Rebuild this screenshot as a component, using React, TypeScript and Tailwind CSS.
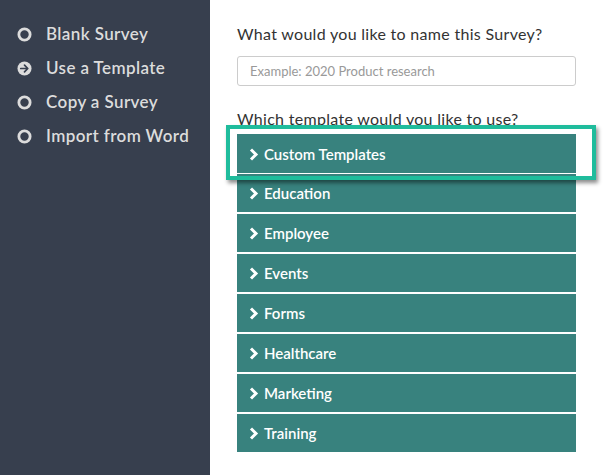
import { FC } from "react";

const sideItems = [
  { label: "Blank Survey", active: false },
  { label: "Use a Template", active: true },
  { label: "Copy a Survey", active: false },
  { label: "Import from Word", active: false },
];

const templates = [
  "Custom Templates",
  "Education",
  "Employee",
  "Events",
  "Forms",
  "Healthcare",
  "Marketing",
  "Training",
];

const RingIcon: FC = () => (
  <svg width="15" height="15" viewBox="0 0 16 16">
    <circle cx="8" cy="8" r="6" fill="none" stroke="#dcdcdc" strokeWidth="3" />
  </svg>
);

const ArrowIcon: FC = () => (
  <svg width="15" height="15" viewBox="0 0 16 16">
    <circle cx="8" cy="8" r="7.5" fill="#dcdcdc" />
    <path d="M4 8h7M8 4.5L11.5 8 8 11.5" fill="none" stroke="#373f4e" strokeWidth="1.8" strokeLinecap="round" strokeLinejoin="round" />
  </svg>
);

const Chevron: FC = () => (
  <svg width="10" height="13" viewBox="0 0 10 13">
    <path d="M2 1.5L7 6.5 2 11.5" fill="none" stroke="#ffffff" strokeWidth="3" />
  </svg>
);

const App: FC = () => {
  return (
    <div className="flex w-[613px] h-[475px] overflow-hidden bg-white font-['Lato','Noto_Sans',sans-serif]">
      {/* sidebar */}
      <div className="w-[210px] shrink-0 bg-[#373f4e] pt-[17px] pl-[17px]">
        {sideItems.map((item) => (
          <div key={item.label} className="flex items-center h-[34px] gap-[14px]">
            {item.active ? <ArrowIcon /> : <RingIcon />}
            <span className="text-[17px] font-semibold tracking-[0.4px] text-[#dcdcdc]">{item.label}</span>
          </div>
        ))}
      </div>

      {/* main */}
      <div className="relative flex-1 pl-[27px] pr-[37px]">
        <h2 className="mt-[24px] text-[16px] leading-[20px] text-[#333] tracking-[0.3px]">
          What would you like to name this Survey?
        </h2>
        <input
          className="mt-[12px] w-full h-[30px] rounded-[3px] border border-[#ccc] px-[12px] text-[13px] text-[#333] placeholder:text-[#999] outline-none"
          placeholder="Example: 2020 Product research"
        />
        <h2 className="mt-[23px] text-[16px] leading-[20px] text-[#333] tracking-[0.3px]">
          Which template would you like to use?
        </h2>
        <div className="mt-[5px] flex flex-col gap-[2px]">
          {templates.map((t) => (
            <div key={t} className="flex items-center h-[38px] bg-[#38827e] pl-[12px] gap-[5px]">
              <Chevron />
              <span className="text-[15px] font-semibold text-white">{t}</span>
            </div>
          ))}
        </div>
        {/* highlight around first template */}
        <div className="absolute left-[16px] top-[125px] w-[370px] h-[55px] border-[4px] border-[#1fbc9c] shadow-[2px_3px_4px_rgba(0,0,0,0.45)] pointer-events-none">
          <div className="ml-[7px] mt-[6px] w-[339px] h-[38px] bg-[#38827e] flex items-center pl-[12px] gap-[5px]">
            <Chevron />
            <span className="text-[15px] font-semibold text-white">Custom Templates</span>
          </div>
        </div>
      </div>
    </div>
  );
};

export default App;
